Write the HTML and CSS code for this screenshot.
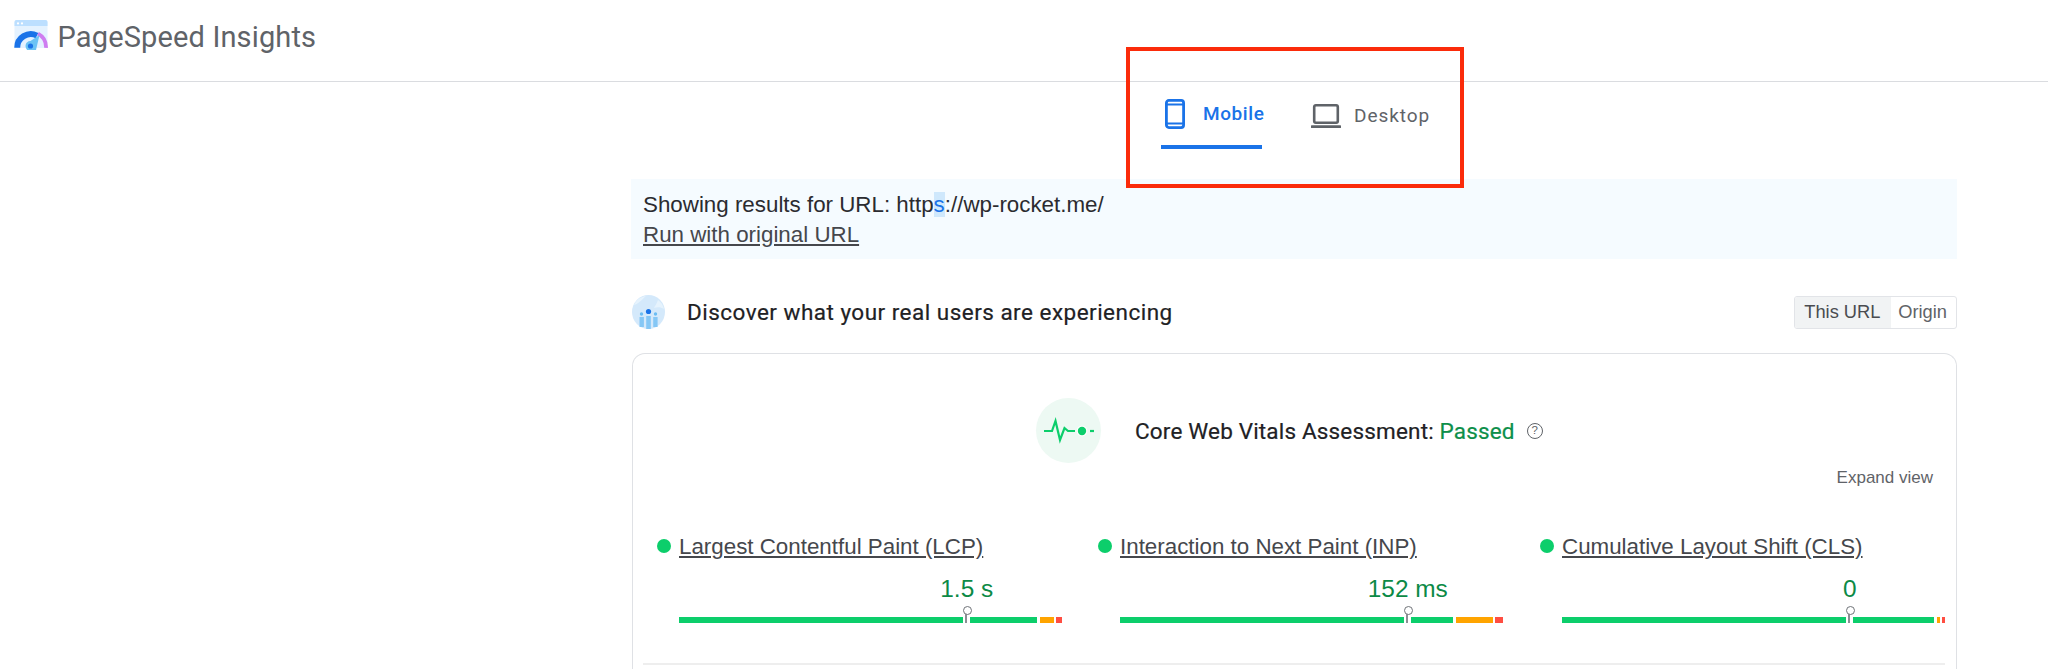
FILE: index.html
```html
<!DOCTYPE html>
<html lang="en">
<head>
<meta charset="utf-8">
<title>PageSpeed Insights</title>
<link rel="stylesheet" href="styles.css">
</head>
<body>
<header class="topbar">
  <svg class="logo" viewBox="0 0 34 30" width="34" height="30" aria-hidden="true">
    <rect x="0.5" y="0" width="33" height="28" rx="2" fill="#e4f2ff"/>
    <path d="M0.5 6V2a2 2 0 0 1 2-2h29a2 2 0 0 1 2 2v4z" fill="#bcdfff"/>
    <circle cx="4" cy="3.4" r="1.1" fill="#fff"/><circle cx="8" cy="3.4" r="1.1" fill="#fff"/>
    <path d="M3.2 27.8A13.6 13.6 0 0 1 23 15.6" fill="none" stroke="#1a73e8" stroke-width="6"/>
    <path d="M24 13.6A15.4 15.4 0 0 1 32 27.8" fill="none" stroke="#cf7df0" stroke-width="3.8"/>
    <path d="M12 24L25.5 15L22 30H13z" fill="#6bc3f5"/>
    <circle cx="16.5" cy="26" r="5" fill="#6bc3f5"/>
    <circle cx="16.5" cy="26" r="2.6" fill="#1a73e8"/>
  </svg>
  <span class="brand">PageSpeed Insights</span>
</header>

<main class="page">
  <nav class="tabs">
    <a class="tab tab-active">
      <svg class="tab-icon" viewBox="0 0 20 30" width="20" height="30" aria-hidden="true">
        <rect x="1.4" y="1.4" width="17.2" height="27.2" rx="2.5" fill="none" stroke="#1a73e8" stroke-width="2.8"/>
        <path d="M1.5 5.5H18.5M1.5 24.5H18.5" stroke="#1a73e8" stroke-width="2"/>
      </svg>
      <span>Mobile</span>
    </a>
    <a class="tab">
      <svg class="tab-icon" viewBox="0 0 30 24" width="30" height="24" aria-hidden="true">
        <rect x="3.2" y="1.3" width="23.6" height="17.4" rx="1.6" fill="none" stroke="#5f6368" stroke-width="2.6"/>
        <rect x="0" y="21.2" width="30" height="2.8" rx="0.6" fill="#5f6368"/>
      </svg>
      <span>Desktop</span>
    </a>
  </nav>

  <section class="notice">
    <div>Showing results for URL: http<span class="hl">s</span>://wp-rocket.me/</div>
    <a class="notice-link">Run with original URL</a>
  </section>

  <div class="section-head">
    <svg class="users-icon" viewBox="0 0 33 34" width="33" height="34" aria-hidden="true">
      <ellipse cx="16.5" cy="17" rx="16.5" ry="17" fill="#d4e9fb"/>
      <path d="M2 10C8 8 10 4 14 1 8 2 4 5 2 10zM22 13c3-1 7-1 10 1-1-4-3-7-6-9-1 3-3 6-4 8z" fill="#e6f3fd"/>
      <circle cx="16.5" cy="16.5" r="2.6" fill="#1a73e8"/>
      <circle cx="9.5" cy="19" r="1.7" fill="#6bbcf3"/>
      <circle cx="23.5" cy="19" r="1.7" fill="#6bbcf3"/>
      <rect x="7.5" y="22" width="4.4" height="10" fill="#85c7f5"/>
      <rect x="14.2" y="21" width="4.6" height="13" fill="#85c7f5"/>
      <rect x="21.2" y="22" width="4.4" height="10" fill="#85c7f5"/>
    </svg>
    <h2 class="section-title">Discover what your real users are experiencing</h2>
    <div class="toggle">
      <span class="toggle-item toggle-on">This URL</span>
      <span class="toggle-item">Origin</span>
    </div>
  </div>

  <section class="card">
    <div class="assessment">
      <span class="pulse">
        <svg viewBox="0 0 65 65" width="65" height="65" aria-hidden="true">
          <path d="M8 33H16L19.5 23L24 42L28.5 30L32 33H39" fill="none" stroke="#0cce6b" stroke-width="2.2"/>
          <circle cx="46" cy="33" r="5.4" fill="#fff"/>
          <circle cx="46" cy="33" r="4.2" fill="#0cce6b"/>
          <path d="M54 33H58" stroke="#0cce6b" stroke-width="2.2"/>
        </svg>
      </span>
      <h3 class="assess-title">Core Web Vitals Assessment: <span class="passed">Passed</span></h3>
      <span class="help">?</span>
    </div>
    <div class="expand-row"><a class="expand">Expand view</a></div>

    <div class="metrics">
      <article class="metric">
        <span class="dot"></span>
        <div class="metric-body">
          <a class="metric-name">Largest Contentful Paint (LCP)</a>
          <div class="value-track"><span class="value">1.5 s</span></div>
          <div class="bar">
            <i class="seg good" style="width:358px"></i><i class="seg avg" style="width:14px"></i><i class="seg poor" style="width:6px"></i>
            <span class="marker"></span>
          </div>
        </div>
      </article>
      <article class="metric">
        <span class="dot"></span>
        <div class="metric-body">
          <a class="metric-name">Interaction to Next Paint (INP)</a>
          <div class="value-track"><span class="value">152 ms</span></div>
          <div class="bar">
            <i class="seg good" style="width:333px"></i><i class="seg avg" style="width:37px"></i><i class="seg poor" style="width:8px"></i>
            <span class="marker"></span>
          </div>
        </div>
      </article>
      <article class="metric">
        <span class="dot"></span>
        <div class="metric-body">
          <a class="metric-name">Cumulative Layout Shift (CLS)</a>
          <div class="value-track"><span class="value">0</span></div>
          <div class="bar">
            <i class="seg good" style="width:372px"></i><i class="seg avg" style="width:3px"></i><i class="seg poor" style="width:3px"></i>
            <span class="marker"></span>
          </div>
        </div>
      </article>
    </div>
    <div class="divider"></div>
  </section>
</main>

<div class="annotation"></div>
</body>
</html>
```

FILE: styles.css
```css
* { box-sizing: border-box; }
html, body { margin: 0; padding: 0; }
body {
  background: #fff;
  color: #212124;
  font-family: "Liberation Sans", Arial, sans-serif;
  position: relative;
  width: 2048px;
  height: 669px;
  overflow: hidden;
}
.topbar {
  height: 82px;
  border-bottom: 1px solid #dadce0;
  display: flex;
  align-items: flex-start;
  padding: 20px 0 0 13.5px;
  gap: 10px;
}
.logo { flex: none; }
.brand {
  font-family: Roboto, "Noto Sans", sans-serif;
  font-size: 29px;
  letter-spacing: 0.15px;
  line-height: 34px;
  color: #5f6368;
}
.page {
  margin-left: 630px;
  width: 1327px;
}
.tabs {
  display: flex;
  height: 67px;
  padding-left: 531px;
}
.tab {
  display: flex;
  align-items: center;
  height: 67px;
  font-family: Roboto, "Noto Sans", sans-serif;
  font-size: 19px;
  letter-spacing: 0.95px;
  color: #5f6368;
  font-weight: 400;
  width: 150px;
  gap: 13px;
  align-self: flex-start;
}
.tab-active {
  color: #1a73e8;
  width: 101px;
  margin-right: 49px;
  gap: 18px;
  padding-left: 4px;
  border-bottom: 4px solid #1a73e8;
  letter-spacing: 0.6px;
  white-space: nowrap;
}
.tab-active span { margin-right: -4px; font-weight: 500; }
.notice {
  margin: 30px 0 0 1px;
  height: 80px;
  background: #f5fbff;
  padding: 11px 12px 9px;
  font-size: 22.35px;
  line-height: 30px;
  color: #2b2b30;
}
.hl { background: #cfe8fc; color: #1a73e8; }
.notice-link { color: #45474c; text-decoration: underline; }
.section-head {
  margin-top: 36px;
  height: 34px;
  display: flex;
  align-items: center;
  padding-left: 2px;
}
.users-icon { flex: none; }
.section-title {
  margin: 0 0 0 22px;
  flex: 1;
  font-family: Roboto, "Noto Sans", sans-serif;
  font-weight: 400;
  font-size: 22.5px;
  letter-spacing: 0.48px;
  color: #212124;
  -webkit-text-stroke: 0.2px #212124;
}
.toggle {
  display: flex;
  height: 33px;
  border: 1px solid #e2e4e8;
  border-radius: 3px;
  overflow: hidden;
  font-size: 18.3px;
  color: #5f6368;
}
.toggle-item {
  display: flex;
  align-items: center;
  padding: 0 9px 0 7px;
}
.toggle-on {
  width: 96px;
  background: #f1f3f4;
  color: #4a4c50;
  padding: 0 0 0 9px;
  white-space: nowrap;
}
.card {
  margin: 24px 0 0 2px;
  height: 316px;
  border: 1px solid #dfe1e5;
  border-bottom: 0;
  border-radius: 13px 13px 0 0;
  padding: 44px 11px 0 10px;
}
.assessment {
  display: flex;
  align-items: center;
  height: 65px;
  padding-left: 393px;
}
.pulse {
  flex: none;
  width: 65px;
  height: 65px;
  border-radius: 50%;
  background: #edf9f3;
}
.pulse svg { display: block; }
.assess-title {
  margin: 0 0 0 34px;
  font-family: Roboto, "Noto Sans", sans-serif;
  font-weight: 400;
  font-size: 22.5px;
  letter-spacing: 0.17px;
  color: #212124;
  -webkit-text-stroke: 0.2px currentColor;
}
.passed { color: #0d8f4a; }
.help {
  width: 16px;
  height: 16px;
  margin-left: 12px;
  border: 1.5px solid #5f6368;
  border-radius: 50%;
  font-size: 11.5px;
  line-height: 13px;
  text-align: center;
  color: #5f6368;
}
.expand-row {
  display: flex;
  justify-content: flex-end;
  margin-top: 5px;
  padding-right: 12px;
  height: 20px;
}
.expand {
  font-size: 17px;
  line-height: 20px;
  color: #5f6368;
}
.metrics {
  display: grid;
  grid-template-columns: 441px 442px 1fr;
  margin-top: 45px;
  padding-left: 14px;
}
.metric { display: flex; gap: 8px; }
.dot {
  flex: none;
  width: 14px;
  height: 14px;
  margin-top: 6px;
  border-radius: 50%;
  background: #0cce6b;
}
.metric-body { width: 383px; }
.metric-name {
  display: block;
  font-size: 22.35px;
  line-height: 26px;
  padding-top: 1px;
  margin-bottom: -1px;
  color: #45474c;
  text-decoration: underline;
  white-space: nowrap;
}
.value-track {
  position: relative;
  height: 30px;
  margin-top: 15px;
}
.value {
  position: absolute;
  left: 75%;
  margin-left: 0.5px;
  transform: translateX(-50%);
  font-size: 24.4px;
  line-height: 30px;
  color: #0c8a46;
  white-space: nowrap;
}
.bar {
  position: relative;
  display: flex;
  gap: 2.5px;
  height: 6.5px;
  margin-top: 12.5px;
}
.seg { display: block; height: 100%; flex: none; }
.good { background: #0cce6b; }
.avg { background: #ffa400; }
.poor { background: #ff4e42; }
.marker {
  position: absolute;
  left: 75%;
  top: 0;
  width: 7px;
  height: 6.5px;
  margin-left: -3.5px;
  background: #fff;
}
.marker::before {
  content: "";
  position: absolute;
  left: 2.5px;
  top: -3px;
  width: 2px;
  height: 9px;
  background: #8a8f94;
}
.marker::after {
  content: "";
  position: absolute;
  left: -0.25px;
  top: -11px;
  width: 7.5px;
  height: 7.5px;
  border: 1.4px solid #6f7378;
  border-radius: 50%;
  background: #fff;
}
.divider {
  height: 2px;
  margin-top: 40px;
  background: #eeeeee;
}
.annotation {
  position: absolute;
  left: 1126px;
  top: 47px;
  width: 338px;
  height: 141px;
  border: 4px solid #fb2b0a;
}
```
